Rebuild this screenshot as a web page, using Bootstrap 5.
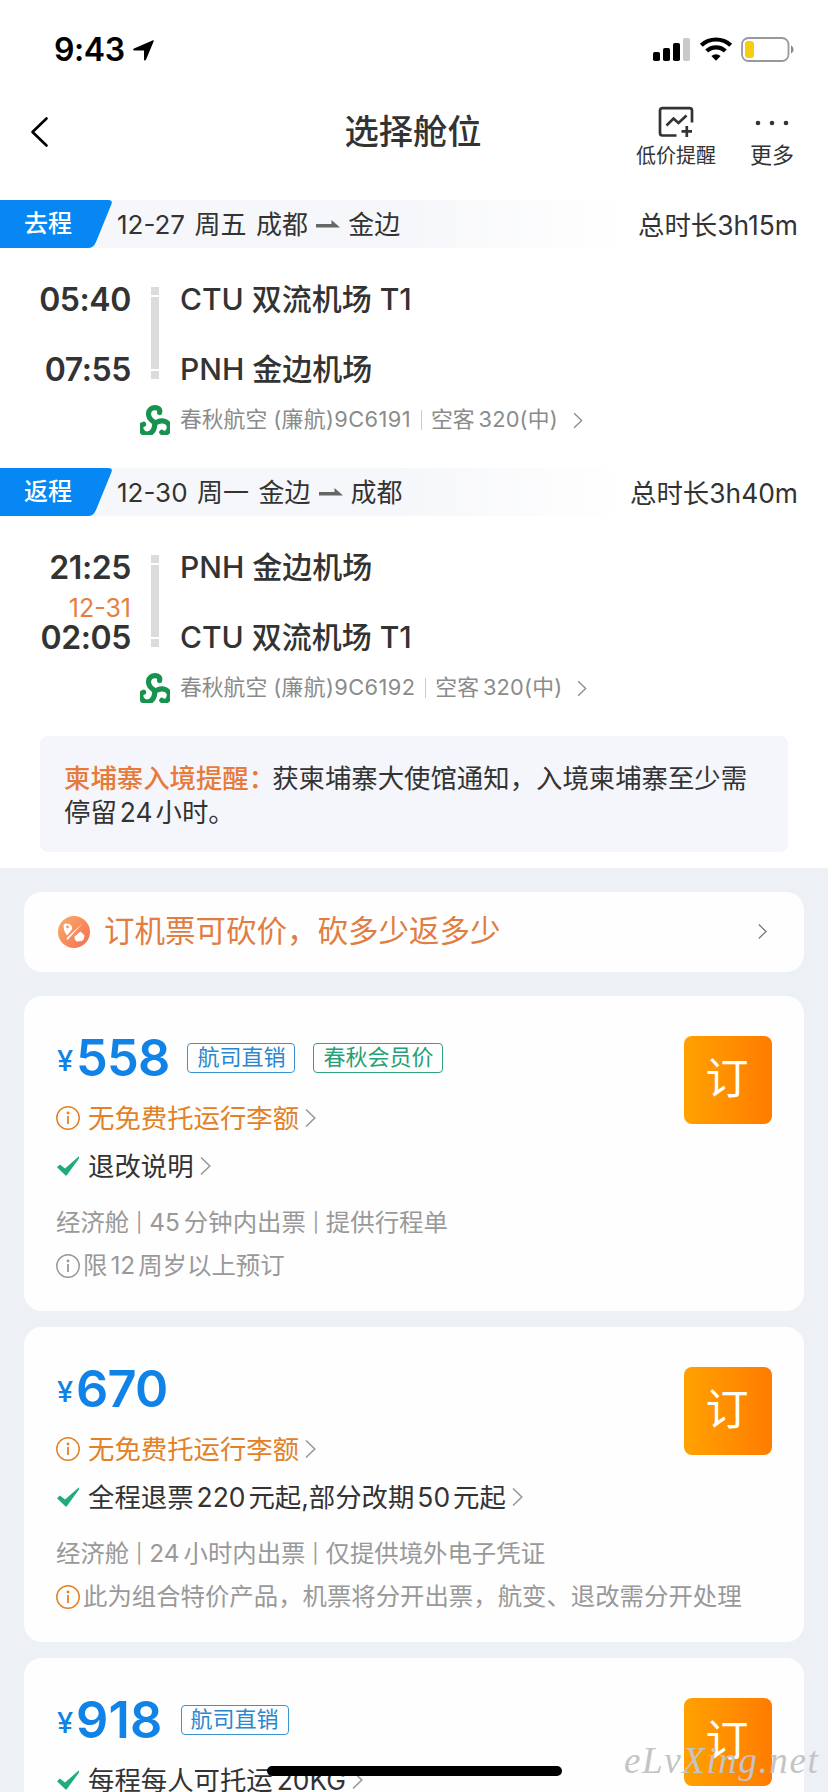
<!DOCTYPE html>
<html lang="zh-CN">
<head>
<meta charset="utf-8">
<meta name="viewport" content="width=device-width, initial-scale=1">
<title>选择舱位</title>
<link href="https://cdn.jsdelivr.net/npm/bootstrap@5.3.0/dist/css/bootstrap.min.css" rel="stylesheet">
<style>
html, body { height: 1792px; overflow: hidden; }
body { width: 828px; background: #fff; color: #333; font-family: Inter, "Noto Sans CJK SC", sans-serif; font-size: 26px; line-height: 1; }
svg { display: block; flex: none; overflow: visible; }
.page { height: 1792px; overflow: hidden; }
.status { height: 100px; padding: 0 34px 0 54px; color: #000; }
.status-time { font-size: 32px; font-weight: 600; letter-spacing: -.4px; }
.topbar { height: 100px; padding: 0 33px 0 31px; }
.topbar-title { font-size: 34.3px; font-weight: 500; left: -2px; right: 0; top: 15px; }
.tool-low { width: 82px; margin-right: 32px; font-size: 20px; }
.tool-more { width: 46px; font-size: 22px; }
.leg-bar { height: 48px; background: linear-gradient(90deg, #f6f7fa 0, #f6f7fa 48%, #fff 76%); padding-right: 30px; }
.leg-bar > span { margin-top: 2px; word-spacing: 2.2px; }
.leg-bar > .total { font-size: 26.4px; letter-spacing: 0; }
.leg-tag { width: 112px; margin-right: 5px; }
.leg-tag span { left: 24px; top: 12px; font-size: 24px; font-weight: 500; color: #fff; }
.leg-body { height: 220px; padding-top: 17px; }
.leg-times { width: 131px; padding-top: 11px; }
.leg-time { font-size: 32px; font-weight: 600; height: 48px; line-height: 48px; letter-spacing: -.4px; }
.leg-next { height: 22px; line-height: 32px; font-size: 25px; color: #e67f3e; }
.leg-rail { width: 8px; margin: 22px 21px 0 20px; gap: 2px; height: 92px; }
.leg-rail i { background: #dcdcdc; height: 8px; }
.leg-rail i:nth-child(2) { flex: 1; }
.port { height: 70px; line-height: 68px; font-size: 30px; font-weight: 500; white-space: nowrap; }
.ops { height: 32px; padding-left: 140px; font-size: 21.8px; color: #8b8b8b; white-space: nowrap; margin-top: -1px; }
.ops span span { margin-left: 6px; letter-spacing: .4px; }
.ops .plane { margin-left: 4px; letter-spacing: .2px; }
.ops-sep { width: 1px; height: 20px; background: #ccc; margin: 0 9px 0 10px; }
.alert-box { margin: 0 40px; height: 116px; border-radius: 8px; background: #f5f6fb; padding: 25px 24px; font-size: 26.4px; line-height: 34px; white-space: nowrap; }
.alert-box b { font-weight: 500; color: #e77b3b; margin-right: -3px; }
.num { margin: 0 3px; }
.offers { margin-top: 16px; background: #edf0f5; padding: 24px 24px 0; height: 924px; }
.panel { background: #fefefe; border-radius: 18px; }
.promo { height: 80px; padding: 0 37px 1px 34px; margin-bottom: 24px; font-size: 30.5px; color: #e17d42; }
.fare { height: 315px; margin-bottom: 16px; padding: 40px 32px 0; }
.fare-info { margin-top: 1px; }
.fare-price { height: 42px; margin-bottom: 15px; color: #1182e6; }
.fare-price .yen { font-size: 29px; font-weight: 500; align-self: flex-end; margin: 0 0 4px 1px; width: 19px; }
.fare-price .amt { font-size: 50.5px; font-weight: 600; letter-spacing: -.8px; }
.fare-price .amt-wide { letter-spacing: .2px; }
.chip { border: 1px solid #3c93d1; border-radius: 4px; color: #2a87ce; font-size: 22px; height: 30px; line-height: 27px; padding: 0 9px; margin-left: 18px; white-space: nowrap; }
.chip.member { border-color: #30a47e; color: #26a077; }
.perk { height: 48px; font-size: 26.4px; white-space: nowrap; }
.perk svg:first-child { margin-right: 8px; }
.perk svg:last-child { margin-left: 6px; }
.orange { color: #e28126; }
.dim { color: #999; font-size: 24.4px; height: 43px; white-space: nowrap; }
.dim u { text-decoration: none; font-size: 19px; vertical-align: 2px; }
.dim-first { margin-top: 11px; }
.btn-book { width: 88px; height: 88px; border: 0; border-radius: 8px; background: linear-gradient(90deg, #ffa200, #ff7c00); color: #fff; font-size: 43px; font-weight: 400; padding: 0 2px 3px 0; flex: none; }
.home-bar { left: 267px; top: 1766px; width: 295px; height: 10px; border-radius: 5px; background: #000; }
.stamp { left: 624px; top: 1739px; font: italic 37px "Liberation Serif", serif; color: #c4c4c4; letter-spacing: 1.600px; white-space: nowrap; }
</style>
</head>
<body>
<svg width="0" height="0" class="position-absolute">
  <defs>
    <linearGradient id="deal" x1="0" y1="0" x2="1" y2="1"><stop offset="0" stop-color="#f8ad69"/><stop offset="1" stop-color="#f56f51"/></linearGradient>
    <symbol id="chev" viewBox="0 0 11 20"><path d="M1 1.5 9.8 10 1 18.5" fill="none" stroke="currentColor" stroke-width="1.6"/></symbol>
    <symbol id="info" viewBox="0 0 24 24"><circle cx="12" cy="12" r="11.2" fill="none" stroke="currentColor" stroke-width="1.5"/><path d="M12 10v8" stroke="currentColor" stroke-width="1.8"/><circle cx="12" cy="7" r="1.4" fill="currentColor"/></symbol>
    <symbol id="tick" viewBox="0 0 24 24"><path d="M1 13.3 3.9 10.4 9 14.6 23 2.2V4.4L10.6 21.6H9.6Z" fill="#1fab7b"/></symbol>
    <symbol id="route" viewBox="0 0 24 8"><path d="M0 4H15.500V0L24 7.500H0Z" fill="#666"/></symbol>
    <path id="arm" d="M0 0C-3-2.500-6.800-4-6.500-9.500-6.200-13.500-3-15.400 0-15.400 3.200-15.400 5.400-13.500 4.600-10.500"/>
    <symbol id="airline" viewBox="0 0 30 30"><g transform="translate(15 18)" fill="none" stroke="#17934f" stroke-width="5.200" stroke-linecap="round"><use href="#arm"/><use href="#arm" transform="rotate(120)"/><use href="#arm" transform="rotate(240)"/></g></symbol>
  </defs>
</svg>
<main class="page position-relative">
  <header>
    <div class="status d-flex align-items-center justify-content-between">
      <div class="d-flex align-items-center"><span class="status-time">9:43</span>
        <svg class="ms-2" width="21" height="21" viewBox="0 0 21 21"><path d="M19.500.4C20.500 0 21 .6 20.600 1.600L13 19.700c-.5 1.200-2 1-2-.3V10.500H1.500C0 10.500-.3 9 1 8.500Z" fill="#000"/></svg>
      </div>
      <svg width="142" height="26" viewBox="0 0 142 26">
        <rect x="1" y="15" width="7" height="9" rx="1.800"/><rect x="11" y="11" width="7" height="13" rx="1.800"/><rect x="21" y="6" width="7" height="18" rx="1.800"/><rect x="31" y="1" width="7" height="23" rx="1.800" fill="#cacaca"/>
        <g fill="none" stroke="#000" stroke-width="4.200"><path d="M49.300 8.300a21.500 21.500 0 0 1 29.400 0"/><path d="M54.700 14.100a13.500 13.500 0 0 1 18.600 0"/></g><path d="M59.400 19a7 7 0 0 1 9.200 0L64 23.800Z"/>
        <rect x="90" y="1" width="46.500" height="23" rx="6.500" fill="none" stroke="#999" stroke-width="1.800"/><rect x="93" y="4" width="9" height="17" rx="3" fill="#f9cc12"/><path d="M139 8.500c3.300 1.500 3.300 6.500 0 8Z" fill="#888"/>
      </svg>
    </div>
    <div class="topbar position-relative d-flex justify-content-between">
      <svg width="17" height="30" viewBox="0 0 17 30" style="margin-top:17px"><path d="M15.500 1.500 1.500 15 15.500 28.500" fill="none" stroke="#000" stroke-width="2.600" stroke-linecap="round" stroke-linejoin="round"/></svg>
      <div class="topbar-title position-absolute text-center pe-none">选择舱位</div>
      <div class="d-flex">
        <div class="tool-low d-flex flex-column align-items-center text-nowrap pt-2">
          <svg width="36" height="30" viewBox="0 0 36 30" style="margin:-1px 0 9px"><g fill="none" stroke="#333" stroke-width="2.700"><path d="M18.500 28.500H4.500Q2 28.500 2 26V3.500Q2 1.200 4.500 1.200H31.500Q34 1.200 34 3.500V15.500"/><path d="M8.500 18.500 15.500 11.500 20.500 16 28.500 8.500M23.500 24.300H34M28.800 19V30"/></g></svg>
          <span>低价提醒</span>
        </div>
        <div class="tool-more d-flex flex-column align-items-center text-nowrap">
          <svg width="34" height="6" viewBox="0 0 34 6" style="margin:20px 0 18px"><g fill="#333"><circle cx="3" cy="3" r="2.300"/><circle cx="17" cy="3" r="2.300"/><circle cx="31" cy="3" r="2.300"/></g></svg>
          <span>更多</span>
        </div>
      </div>
    </div>
  </header>

  <section>
    <div class="leg-bar d-flex align-items-center">
      <div class="leg-tag position-relative"><svg width="112" height="48"><path d="M0 0H108Q113 0 111.500 4L96 42Q93.500 48 88 48H0Z" fill="#0687f3"/></svg><span class="position-absolute">去程</span></div>
      <span>12-27 周五 成都</span><svg class="mx-2" width="24" height="8"><use href="#route"/></svg><span>金边</span>
      <span class="total ms-auto">总时长3h15m</span>
    </div>
    <div class="leg-body">
      <div class="d-flex">
        <div class="leg-times text-end"><div class="leg-time">05:40</div><div class="leg-next"></div><div class="leg-time">07:55</div></div>
        <div class="leg-rail d-flex flex-column"><i></i><i></i><i></i></div>
        <div><div class="port">CTU 双流机场 T1</div><div class="port">PNH 金边机场</div></div>
      </div>
      <div class="ops d-flex align-items-center"><svg width="30" height="30" style="margin-right:10px"><use href="#airline"/></svg><span>春秋航空<span>(廉航)9C6191</span></span><i class="ops-sep"></i><span>空客<span class="plane">320(中)</span></span><svg style="margin-left:15px" width="10" height="17"><use href="#chev"/></svg></div>
    </div>

    <div class="leg-bar d-flex align-items-center">
      <div class="leg-tag position-relative"><svg width="112" height="48"><path d="M0 0H108Q113 0 111.500 4L96 42Q93.500 48 88 48H0Z" fill="#0687f3"/></svg><span class="position-absolute">返程</span></div>
      <span>12-30 周一 金边</span><svg class="mx-2" width="24" height="8"><use href="#route"/></svg><span>成都</span>
      <span class="total ms-auto">总时长3h40m</span>
    </div>
    <div class="leg-body">
      <div class="d-flex">
        <div class="leg-times text-end"><div class="leg-time">21:25</div><div class="leg-next">12-31</div><div class="leg-time">02:05</div></div>
        <div class="leg-rail d-flex flex-column"><i></i><i></i><i></i></div>
        <div><div class="port">PNH 金边机场</div><div class="port">CTU 双流机场 T1</div></div>
      </div>
      <div class="ops d-flex align-items-center"><svg width="30" height="30" style="margin-right:10px"><use href="#airline"/></svg><span>春秋航空<span>(廉航)9C6192</span></span><i class="ops-sep"></i><span>空客<span class="plane">320(中)</span></span><svg style="margin-left:15px" width="10" height="17"><use href="#chev"/></svg></div>
    </div>
    <div class="alert-box"><b>柬埔寨入境提醒：</b>获柬埔寨大使馆通知，入境柬埔寨至少需<br>停留<span class="num">24</span>小时。</div>
  </section>

  <section class="offers">
    <div class="panel promo d-flex align-items-center">
      <svg width="32" height="32" viewBox="0 0 32 32" style="margin-right:14px"><circle cx="16" cy="16" r="16" fill="url(#deal)"/><path d="M5.500 9.500Q6 7.500 8 7.500L11.500 8Q15.500 10.500 13.500 14L9 19.500Q5.500 15 5.500 9.500Z" fill="#fff"/><circle cx="9.500" cy="11" r="1.400" fill="#f69a64"/><path d="M24.500 7.500 9.500 24Q8 23.500 9 21.500Z" fill="#fff"/><path d="M16.500 20.500 22.500 15.500 26.500 19.500Q26.500 23 24 25L18.500 25.500Q16 23.500 16.500 20.500Z" fill="#fff"/></svg>
      <span class="text-nowrap">订机票可砍价，砍多少返多少</span>
      <svg class="ms-auto" width="9" height="17" style="color:#777"><use href="#chev"/></svg>
    </div>

    <article class="panel fare d-flex justify-content-between">
      <div class="fare-info">
        <div class="fare-price d-flex align-items-center"><span class="yen">¥</span><span class="amt">558</span><span class="chip">航司直销</span><span class="chip member">春秋会员价</span></div>
        <div class="perk orange d-flex align-items-center"><svg width="24" height="24"><use href="#info"/></svg><span>无免费托运行李额</span><svg width="11" height="20" style="color:#999"><use href="#chev"/></svg></div>
        <div class="perk d-flex align-items-center"><svg width="24" height="24"><use href="#tick"/></svg><span>退改说明</span><svg width="11" height="20" style="color:#999"><use href="#chev"/></svg></div>
        <div class="dim dim-first d-flex align-items-center"><span>经济舱 <u>|</u> <span class="me-1">45</span>分钟内出票 <u>|</u> 提供行程单</span></div>
        <div class="dim d-flex align-items-center"><svg width="24" height="24" style="margin-right:3px"><use href="#info"/></svg><span>限<span class="num">12</span>周岁以上预订</span></div>
      </div>
      <button class="btn-book">订</button>
    </article>

    <article class="panel fare d-flex justify-content-between">
      <div class="fare-info">
        <div class="fare-price d-flex align-items-center"><span class="yen">¥</span><span class="amt">670</span></div>
        <div class="perk orange d-flex align-items-center"><svg width="24" height="24"><use href="#info"/></svg><span>无免费托运行李额</span><svg width="11" height="20" style="color:#999"><use href="#chev"/></svg></div>
        <div class="perk d-flex align-items-center"><svg width="24" height="24"><use href="#tick"/></svg><span>全程退票<span class="num">220</span>元起,部分改期<span class="num">50</span>元起</span><svg width="11" height="20" style="color:#999"><use href="#chev"/></svg></div>
        <div class="dim dim-first d-flex align-items-center"><span>经济舱 <u>|</u> <span class="me-1">24</span>小时内出票 <u>|</u> 仅提供境外电子凭证</span></div>
        <div class="dim d-flex align-items-center"><svg class="orange" width="24" height="24" style="margin-right:3px"><use href="#info"/></svg><span>此为组合特价产品，机票将分开出票，航变、退改需分开处理</span></div>
      </div>
      <button class="btn-book position-absolute" style="right:56px">订</button>
    </article>

    <article class="panel fare d-flex justify-content-between">
      <div class="fare-info">
        <div class="fare-price d-flex align-items-center"><span class="yen">¥</span><span class="amt amt-wide">918</span><span class="chip">航司直销</span></div>
        <div class="perk d-flex align-items-center"><svg width="24" height="24"><use href="#tick"/></svg><span>每程每人可托运<span class="ms-1">20KG</span></span><svg width="11" height="20" style="color:#999"><use href="#chev"/></svg></div>
      </div>
      <button class="btn-book">订</button>
    </article>
  </section>

  <div class="home-bar position-absolute"></div>
  <div class="stamp position-absolute">eLvXing.net</div>
</main>
<script src="https://cdn.jsdelivr.net/npm/bootstrap@5.3.0/dist/js/bootstrap.bundle.min.js"></script>
</body>
</html>
